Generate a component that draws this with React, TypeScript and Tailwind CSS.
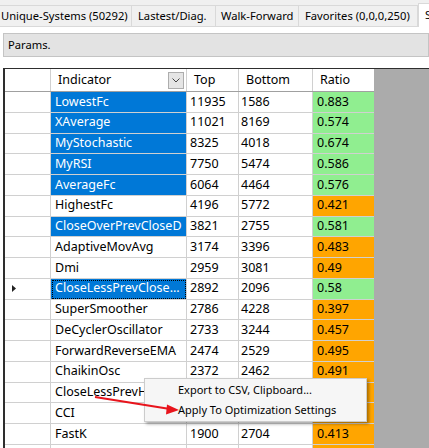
import React from "react";

type Row = {
  name: string;
  top: string;
  bottom: string;
  ratio: string;
  selected: boolean;
  good: boolean;
  current?: boolean;
};

const rows: Row[] = [
  { name: "LowestFc", top: "11935", bottom: "1586", ratio: "0.883", selected: true, good: true },
  { name: "XAverage", top: "11021", bottom: "8169", ratio: "0.574", selected: true, good: true },
  { name: "MyStochastic", top: "8325", bottom: "4018", ratio: "0.674", selected: true, good: true },
  { name: "MyRSI", top: "7750", bottom: "5474", ratio: "0.586", selected: true, good: true },
  { name: "AverageFc", top: "6064", bottom: "4464", ratio: "0.576", selected: true, good: true },
  { name: "HighestFc", top: "4196", bottom: "5772", ratio: "0.421", selected: false, good: false },
  { name: "CloseOverPrevCloseD", top: "3821", bottom: "2755", ratio: "0.581", selected: true, good: true },
  { name: "AdaptiveMovAvg", top: "3174", bottom: "3396", ratio: "0.483", selected: false, good: false },
  { name: "Dmi", top: "2959", bottom: "3081", ratio: "0.49", selected: false, good: false },
  { name: "CloseLessPrevClose...", top: "2892", bottom: "2096", ratio: "0.58", selected: true, good: true, current: true },
  { name: "SuperSmoother", top: "2786", bottom: "4228", ratio: "0.397", selected: false, good: false },
  { name: "DeCyclerOscillator", top: "2733", bottom: "3244", ratio: "0.457", selected: false, good: false },
  { name: "ForwardReverseEMA", top: "2474", bottom: "2529", ratio: "0.495", selected: false, good: false },
  { name: "ChaikinOsc", top: "2372", bottom: "2462", ratio: "0.491", selected: false, good: false },
  { name: "CloseLessPrevHigh", top: "2290", bottom: "2631", ratio: "0.465", selected: false, good: false },
  { name: "CCI", top: "2104", bottom: "2410", ratio: "0.466", selected: false, good: false },
  { name: "FastK", top: "1900", bottom: "2704", ratio: "0.413", selected: false, good: false },
  { name: "SlowD", top: "1850", bottom: "2790", ratio: "0.399", selected: false, good: false },
];

const tabs = [
  { label: "Unique-Systems (50292)", w: "w-[132px]", pad: "pl-[1px]" },
  { label: "Lastest/Diag.", w: "w-[84px]", pad: "pl-[6px]" },
  { label: "Walk-Forward", w: "w-[83px]", pad: "pl-[5px]" },
  { label: "Favorites (0,0,0,250)", w: "w-[119px]", pad: "pl-[6px]" },
];

export default function App() {
  return (
    <div className="relative h-[448px] w-[429px] overflow-hidden bg-white font-['Noto_Sans',sans-serif] text-[11.2px] text-black">
      {/* tab strip */}
      <div className="flex h-[27px] items-end border-b border-[#d9d9d9] bg-[#f0f0f0]">
        {tabs.map((t) => (
          <div
            key={t.label}
            className={`flex h-[21px] shrink-0 items-center overflow-hidden whitespace-nowrap border-t border-r border-[#d9d9d9] bg-[#f0f0f0] ${t.w} ${t.pad}`}
          >
            {t.label}
          </div>
        ))}
        <div className="mb-[-1px] flex h-[24px] shrink-0 items-center whitespace-nowrap border-t border-l border-[#d9d9d9] bg-white pl-[6px]">
          Search
        </div>
      </div>

      {/* tab page */}
      <div className="pl-[3px] pt-[6px]">
        <div className="flex h-[24px] items-center border border-[#c4c4c4] bg-[#e3e3e3] pl-[4px]">
          Params.
        </div>

        <div className="mt-[11px] border-l-2 border-t border-[#2e2e2e] bg-[#ababab] text-[12.5px]">
          {/* header */}
          <div className="flex h-[23px] w-[369px] border-b border-[#a0a0a0] bg-white">
            <div className="w-[46px] shrink-0 border-r border-[#d0d0d0]" />
            <div className="flex w-[136px] shrink-0 items-center justify-between border-r border-[#d0d0d0] pl-[7px] pr-[2px]">
              <span>Indicator</span>
              <span className="flex h-[17px] w-[16px] items-center justify-center border border-[#adadad] bg-[#e5e5e5]">
                <svg width="8" height="5" viewBox="0 0 8 5">
                  <polyline points="0.5,0.5 4,4 7.5,0.5" fill="none" stroke="#444" strokeWidth="1" />
                </svg>
              </span>
            </div>
            <div className="flex w-[52px] shrink-0 items-center border-r border-[#d0d0d0] pl-[7px]">Top</div>
            <div className="flex w-[74px] shrink-0 items-center border-r border-[#d0d0d0] pl-[7px]">Bottom</div>
            <div className="flex w-[61px] shrink-0 items-center pl-[7px]">Ratio</div>
          </div>

          {rows.map((r) => (
            <div key={r.name} className="flex h-[20.75px] w-[369px] bg-white">
              <div className="flex w-[46px] shrink-0 items-center border-r border-b border-[#d0d0d0] pl-[7px]">
                {r.current && (
                  <svg width="4" height="7" viewBox="0 0 4 7">
                    <polygon points="0,0 4,3.5 0,7" fill="#222" />
                  </svg>
                )}
              </div>
              <div
                className={`flex w-[136px] shrink-0 items-center overflow-hidden whitespace-nowrap border-r border-b pl-[4px] ${
                  r.selected ? "border-[#d0d0d0] bg-[#0078d7] text-white" : "border-[#d0d0d0] bg-white"
                } ${r.current ? "outline-1 outline-dotted outline-black -outline-offset-2" : ""}`}
              >
                {r.name}
              </div>
              <div className="flex w-[52px] shrink-0 items-center border-r border-b border-[#d0d0d0] pl-[3px]">{r.top}</div>
              <div className="flex w-[74px] shrink-0 items-center border-r border-b border-[#d0d0d0] pl-[2px]">{r.bottom}</div>
              <div
                className={`flex w-[61px] shrink-0 items-center border-b border-[#d0d0d0] pl-[4px] ${
                  r.good ? "bg-[#90ee90]" : "bg-[#ffa500]"
                }`}
              >
                {r.ratio}
              </div>
            </div>
          ))}
        </div>
      </div>

      {/* context menu */}
      <div className="absolute left-[144px] top-[378px] flex w-[223px] flex-col border border-[#cccccc] bg-[#f6f6f6] py-[1px] text-[11px] shadow-[2px_2px_3px_rgba(0,0,0,0.35)]">
        <div className="flex h-[20px] items-center pl-[33px]">Export to CSV, Clipboard...</div>
        <div className="flex h-[20px] items-center pl-[33px]">Apply To Optimization Settings</div>
      </div>

      {/* annotation arrow */}
      <svg className="pointer-events-none absolute left-0 top-0" width="429" height="448" viewBox="0 0 429 448">
        <line x1="95" y1="397" x2="170" y2="409" stroke="#e8141c" strokeWidth="2" />
        <polygon points="179,410 167,404.5 166,414.5" fill="#e8141c" />
      </svg>
    </div>
  );
}
